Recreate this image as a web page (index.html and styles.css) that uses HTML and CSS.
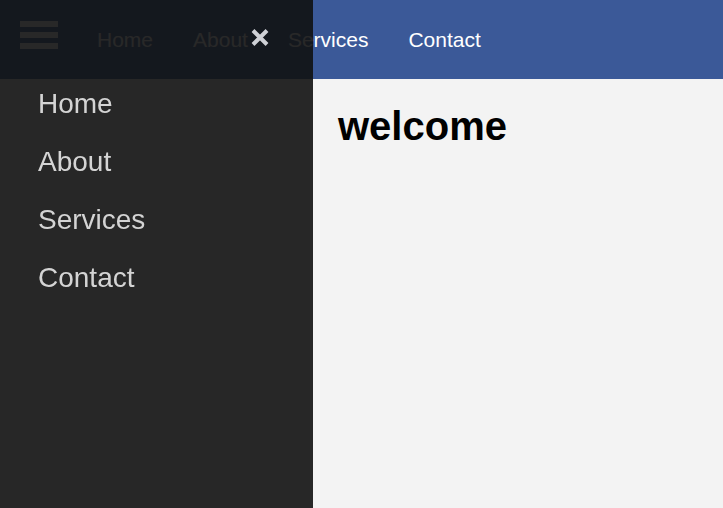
FILE: index.html
```html
<!DOCTYPE html>
<html lang="en">
<head>
<meta charset="utf-8">
<title>welcome</title>
<link rel="stylesheet" href="styles.css">
</head>
<body>
<header class="topbar">
  <span class="burger" aria-label="Open menu"><i></i><i></i><i></i></span>
  <nav class="topnav">
    <a href="#">Home</a>
    <a href="#">About</a>
    <a href="#">Services</a>
    <a href="#">Contact</a>
  </nav>
</header>
<aside class="sidenav">
  <a class="closebtn" href="#" aria-label="Close">
    <svg width="18" height="19" viewBox="0 0 18 19"><path d="M2 2.5 L16 16.5 M16 2.5 L2 16.5" stroke="currentColor" stroke-width="4" stroke-linecap="butt" fill="none"/></svg>
  </a>
  <nav class="sidelinks">
    <a href="#">Home</a>
    <a href="#">About</a>
    <a href="#">Services</a>
    <a href="#">Contact</a>
  </nav>
</aside>
<main class="main">
  <h1 class="title">welcome</h1>
</main>
</body>
</html>
```
FILE: styles.css
```css
html, body {
  margin: 0;
  padding: 0;
  height: 100%;
}
body {
  background: #f3f3f3;
  font-family: "Liberation Sans", Arial, sans-serif;
}
.topbar {
  display: flex;
  align-items: center;
  height: 79px;
  background: #3b5998;
}
.burger {
  align-self: flex-start;
  margin: 21px 19px 0 20px;
  width: 38px;
  display: flex;
  flex-direction: column;
  gap: 5px;
}
.burger i {
  display: block;
  height: 6px;
  background: #ffffff;
}
.topnav {
  display: flex;
  padding-top: 1px;
}
.topnav a {
  color: #ffffff;
  text-decoration: none;
  font-size: 21px;
  padding: 0 20px;
}
.sidenav {
  position: fixed;
  top: 0;
  left: 0;
  width: 313px;
  height: 100%;
  background: rgba(17, 17, 17, 0.9);
}
.closebtn {
  position: absolute;
  top: 28px;
  right: 44px;
  color: #cfd1d6;
  line-height: 0;
}
.sidelinks {
  display: flex;
  flex-direction: column;
  padding-top: 75px;
}
.sidelinks a {
  color: #d4d4d4;
  text-decoration: none;
  font-size: 28px;
  line-height: 32px;
  padding: 13px 8px 13px 38px;
}
.main {
  margin-left: 313px;
  padding: 25px 25px;
}
.title {
  margin: 0;
  font-size: 40px;
  font-weight: bold;
  color: #000;
}
```
